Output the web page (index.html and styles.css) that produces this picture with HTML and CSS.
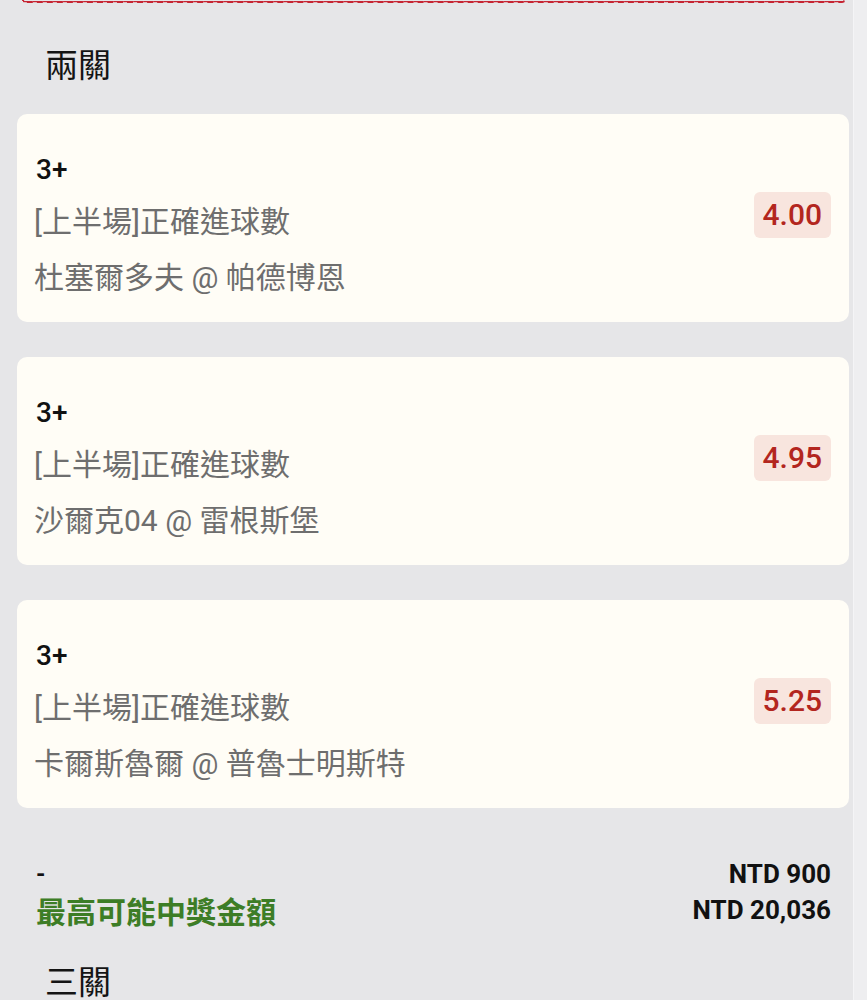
FILE: index.html
```html
<!DOCTYPE html>
<html lang="zh-Hant">
<head>
  <meta charset="UTF-8">
  <meta name="viewport" content="width=device-width, initial-scale=1.0">
  <title>過關投注</title>
  <link rel="stylesheet" href="styles.css">
</head>
<body>

  <div class="page">
    <main class="slip">

      <div class="dash-box"></div>

      <h2 class="group-title">兩關</h2>

      <section class="bet-card">
        <div class="bet-info">
          <div class="pick">3+</div>
          <div class="market">[上半場]正確進球數</div>
          <div class="match">杜塞爾多夫 @ 帕德博恩</div>
        </div>
        <span class="odds">4.00</span>
      </section>

      <section class="bet-card">
        <div class="bet-info">
          <div class="pick">3+</div>
          <div class="market">[上半場]正確進球數</div>
          <div class="match">沙爾克04 @ 雷根斯堡</div>
        </div>
        <span class="odds">4.95</span>
      </section>

      <section class="bet-card">
        <div class="bet-info">
          <div class="pick">3+</div>
          <div class="market">[上半場]正確進球數</div>
          <div class="match">卡爾斯魯爾 @ 普魯士明斯特</div>
        </div>
        <span class="odds">5.25</span>
      </section>

      <div class="summary">
        <div class="summary-row">
          <span class="stake-label">-</span>
          <span class="amount">NTD 900</span>
        </div>
        <div class="summary-row">
          <span class="win-label">最高可能中獎金額</span>
          <span class="amount">NTD 20,036</span>
        </div>
      </div>

      <h2 class="group-title group-next">三關</h2>

    </main>

    <div class="scroll-track"></div>
  </div>

</body>
</html>
```

FILE: styles.css
```css
/* bet slip page */
html, body {
  margin: 0;
  padding: 0;
}
body {
  background-color: #e6e6e8;
  font-family: Roboto, "Noto Sans CJK TC", sans-serif;
  color: #111;
  overflow: hidden;
}
.page {
  display: flex;
  height: 1000px;
}
.slip {
  flex: 1;
  padding: 0 4px 0 17px;
}
.scroll-track {
  width: 13px;
  background-color: #eeeef0;
  border-left: 1px solid #f4f4f6;
}

/* bottom edge of the box above */
.dash-box {
  height: 1px;
  margin: 0 4px 0 5px;
  border: 2px dashed #c62533;
  border-top: none;
  border-radius: 0 0 10px 10px;
}

.group-title {
  margin: 38px 0 29px 28px;
  font-family: "Noto Sans CJK TC", sans-serif;
  font-size: 33px;
  font-weight: 400;
  line-height: 44px;
  color: #141414;
}
.group-next {
  margin-top: 30px;
  margin-bottom: 0;
}

/* one leg of the parlay */
.bet-card {
  display: flex;
  align-items: center;
  justify-content: space-between;
  height: 208px;
  box-sizing: border-box;
  padding: 36px 18px 16px 19px;
  margin-bottom: 35px;
  background-color: #fffdf6;
  border-radius: 10px;
}
.pick {
  font-size: 28px;
  font-weight: 500;
  line-height: 40px;
  color: #111;
}
.market,
.match {
  font-size: 30px;
  line-height: 56px;
  color: #6e6e6e;
  margin-left: -2px;
}
.market {
  margin-top: 4px;
}
.odds {
  align-self: flex-start;
  margin-top: 42px;
  padding: 0 9px;
  line-height: 46px;
  font-size: 30px;
  font-weight: 500;
  color: #b3261e;
  background-color: #f8e5de;
  border-radius: 6px;
}

/* totals under the legs */
.summary {
  margin: 48px 18px 0 19px;
}
.summary-row {
  display: flex;
  justify-content: space-between;
  align-items: center;
  height: 36px;
}
.stake-label {
  font-size: 24px;
  font-weight: 700;
}
.win-label {
  font-family: "Noto Sans CJK TC", sans-serif;
  font-size: 30px;
  font-weight: 700;
  color: #3d7d26;
}
.amount {
  font-size: 26px;
  font-weight: 700;
  color: #111;
}
```
